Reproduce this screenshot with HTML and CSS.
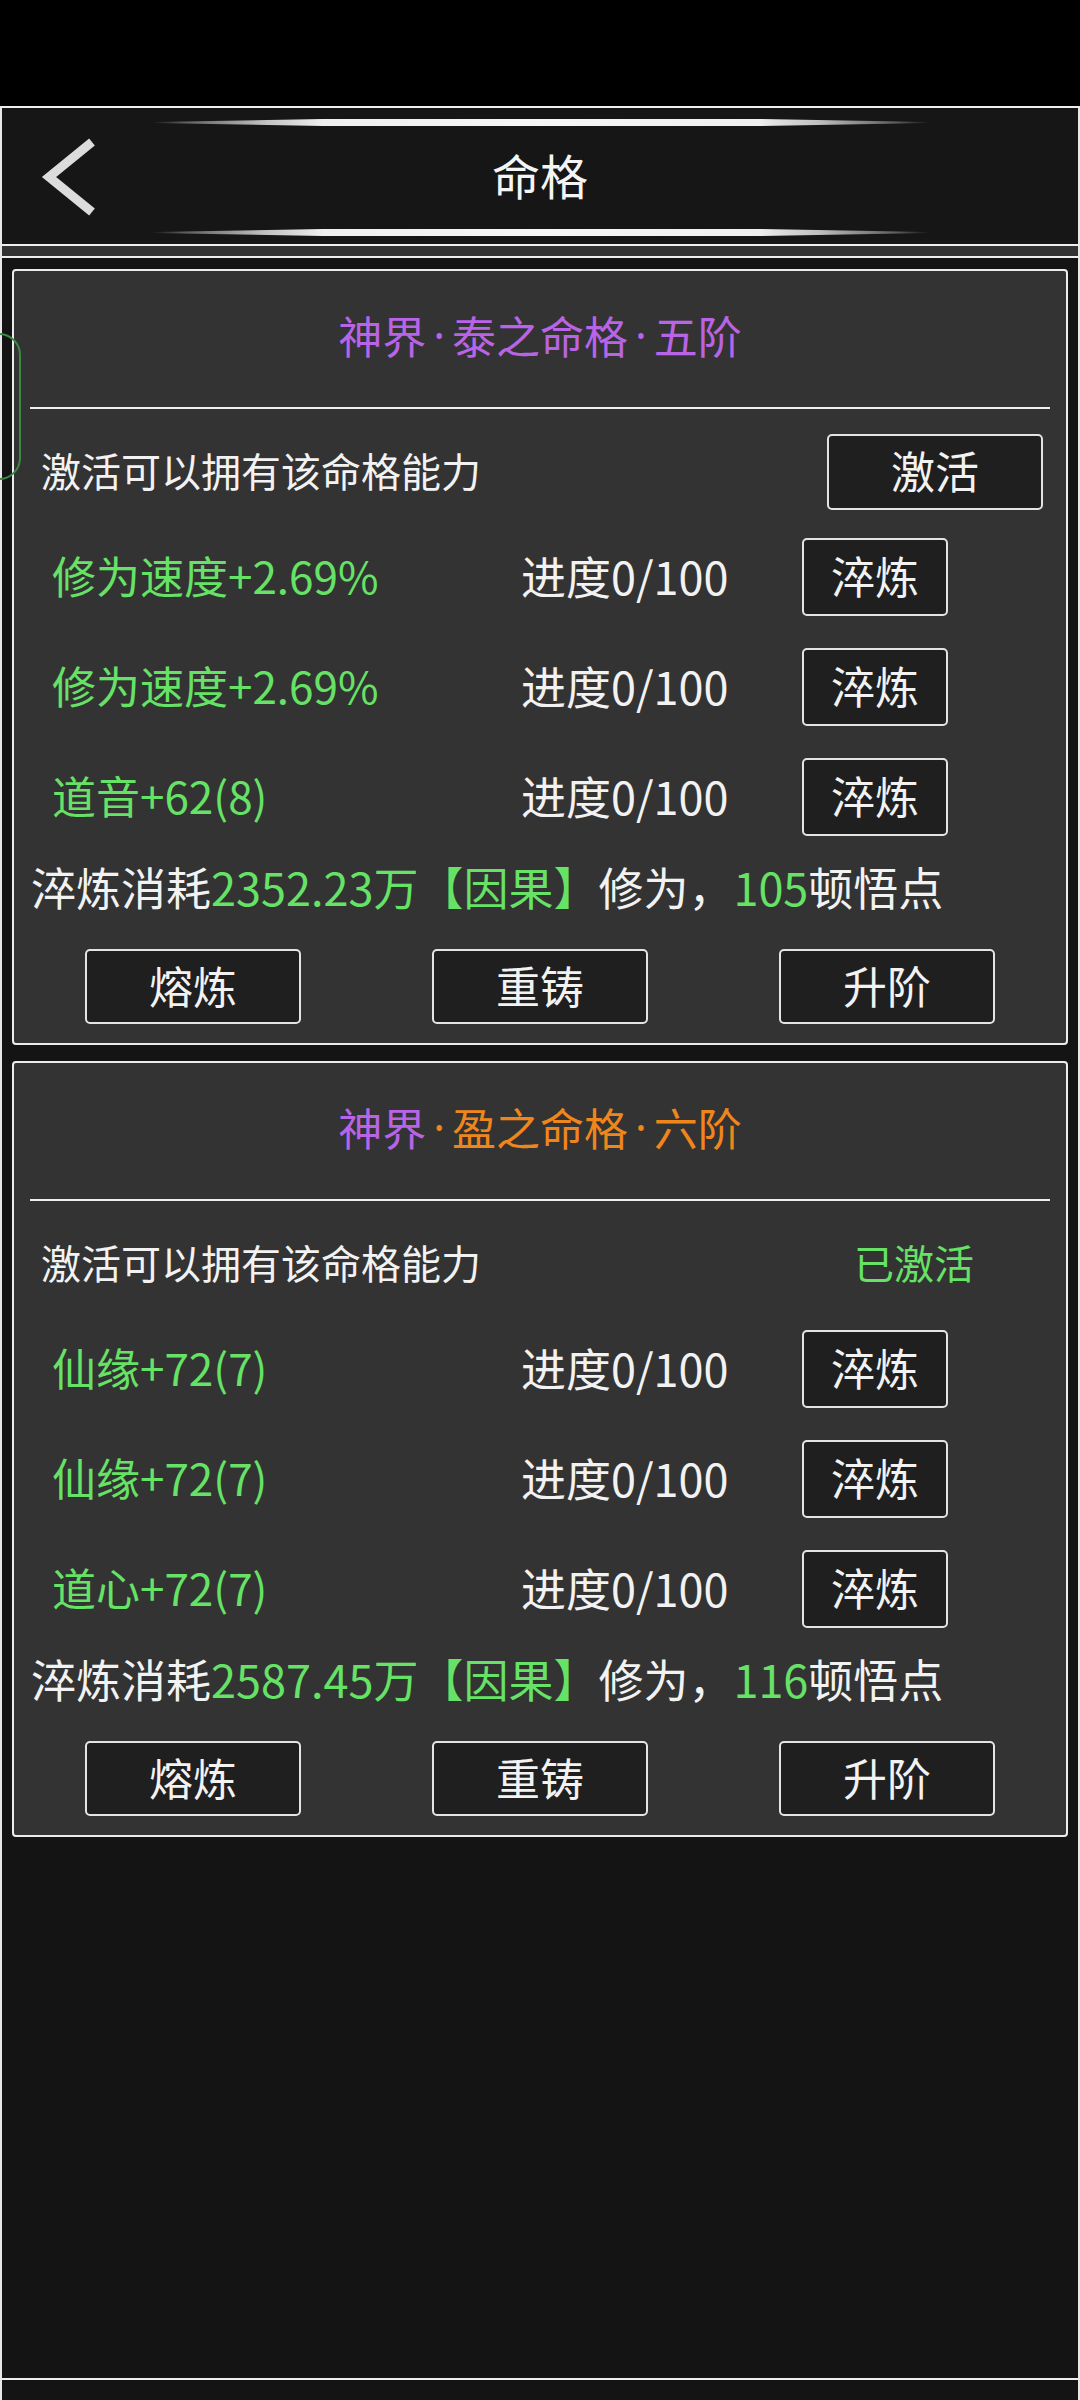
FILE: index.html
```html
<!DOCTYPE html>
<html lang="zh-CN">
<head>
<meta charset="utf-8">
<title>命格</title>
<link rel="stylesheet" href="styles.css">
</head>
<body>
<div class="app">
  <div class="statusbar"></div>
  <div class="frame">
    <header class="header">
      <div class="deco"></div>
      <div class="header-row">
        <svg class="back" width="56" height="80" viewBox="0 0 56 80" aria-label="返回">
          <polyline points="51,4 8,39 51,74" fill="none" stroke="#dcdcdc" stroke-width="9" stroke-linejoin="miter" stroke-miterlimit="10"/>
        </svg>
        <div class="title">命格</div>
        <div class="spacer"></div>
      </div>
      <div class="deco"></div>
    </header>
    <div class="band"></div>
    <main class="content">
      <div class="side-tab"></div>

      <section class="card">
        <div class="card-title purple">神界<span class="dot">·</span>泰之命格<span class="dot">·</span>五阶</div>
        <div class="sep"></div>
        <div class="act-row">
          <span class="act-text">激活可以拥有该命格能力</span>
          <button class="btn btn-wide">激活</button>
        </div>
        <div class="attrs">
          <div class="attr">
            <span class="attr-name">修为速度+2.69%</span>
            <span class="attr-prog">进度0/100</span>
            <button class="btn btn-sm">淬炼</button>
          </div>
          <div class="attr">
            <span class="attr-name">修为速度+2.69%</span>
            <span class="attr-prog">进度0/100</span>
            <button class="btn btn-sm">淬炼</button>
          </div>
          <div class="attr">
            <span class="attr-name">道音+62(8)</span>
            <span class="attr-prog">进度0/100</span>
            <button class="btn btn-sm">淬炼</button>
          </div>
        </div>
        <div class="cost">淬炼消耗<span class="green">2352.23万【因果】</span>修为，<span class="green">105</span>顿悟点</div>
        <div class="actions">
          <button class="btn btn-wide">熔炼</button>
          <button class="btn btn-wide">重铸</button>
          <button class="btn btn-wide">升阶</button>
        </div>
      </section>

      <section class="card">
        <div class="card-title"><span class="purple">神界</span><span class="dot orange">·</span><span class="orange">盈之命格</span><span class="dot orange">·</span><span class="orange">六阶</span></div>
        <div class="sep"></div>
        <div class="act-row">
          <span class="act-text">激活可以拥有该命格能力</span>
          <span class="status">已激活</span>
        </div>
        <div class="attrs">
          <div class="attr">
            <span class="attr-name">仙缘+72(7)</span>
            <span class="attr-prog">进度0/100</span>
            <button class="btn btn-sm">淬炼</button>
          </div>
          <div class="attr">
            <span class="attr-name">仙缘+72(7)</span>
            <span class="attr-prog">进度0/100</span>
            <button class="btn btn-sm">淬炼</button>
          </div>
          <div class="attr">
            <span class="attr-name">道心+72(7)</span>
            <span class="attr-prog">进度0/100</span>
            <button class="btn btn-sm">淬炼</button>
          </div>
        </div>
        <div class="cost">淬炼消耗<span class="green">2587.45万【因果】</span>修为，<span class="green">116</span>顿悟点</div>
        <div class="actions">
          <button class="btn btn-wide">熔炼</button>
          <button class="btn btn-wide">重铸</button>
          <button class="btn btn-wide">升阶</button>
        </div>
      </section>
    </main>
    <div class="footer"></div>
  </div>
</div>
</body>
</html>
```

FILE: styles.css
```css
* {
  box-sizing: border-box;
}

html, body {
  margin: 0;
  padding: 0;
  background: #000;
}

body {
  font-family: "Noto Sans CJK SC", "Noto Sans", sans-serif;
  color: #f2f2f2;
  line-height: 1.2;
}

.app {
  width: 1080px;
  height: 2400px;
  display: flex;
  flex-direction: column;
  overflow: hidden;
}

.statusbar {
  height: 106px;
  background: #000;
  flex: none;
}

.frame {
  flex: 1;
  display: flex;
  flex-direction: column;
  border-top: 2px solid #efefef;
  border-left: 2px solid #e8e8e8;
  border-right: 2px solid #e8e8e8;
  background: #141414;
}

/* header */
.header {
  height: 136px;
  flex: none;
  background: #161616;
  padding-top: 11px;
  display: flex;
  flex-direction: column;
}

.deco {
  width: 777px;
  height: 7px;
  margin: 0 auto;
  flex: none;
  background: linear-gradient(90deg,
    rgba(120,120,120,0) 0%,
    #5a5a5a 4%,
    #bdbdbd 14%,
    #efefef 22%,
    #f6f6f6 50%,
    #efefef 78%,
    #bdbdbd 86%,
    #5a5a5a 96%,
    rgba(120,120,120,0) 100%);
  clip-path: polygon(0 42%, 22% 0, 78% 0, 100% 42%, 100% 58%, 78% 100%, 22% 100%, 0 58%);
}

.header-row {
  height: 103px;
  display: grid;
  grid-template-columns: 1fr auto 1fr;
  align-items: center;
}

.back {
  margin-left: 39px;
  display: block;
}

.title {
  font-size: 48px;
  color: #f4f4f4;
  line-height: 1;
  padding-bottom: 8px;
}

.band {
  flex: none;
  height: 14px;
  background: #333;
  border-top: 2px solid #efefef;
  border-bottom: 2px solid #efefef;
}

/* content */
.content {
  flex: 1;
  position: relative;
  padding: 11px 10px 0;
  display: flex;
  flex-direction: column;
  gap: 16px;
}

.side-tab {
  position: absolute;
  left: -62px;
  top: 75px;
  width: 81px;
  height: 147px;
  border: 2px solid #3b8a44;
  border-radius: 22px;
}

.card {
  background: #333333;
  border: 2px solid #ececec;
  border-radius: 4px;
  padding-bottom: 19px;
}

.card-title {
  height: 136px;
  padding-bottom: 8px;
  display: flex;
  align-items: center;
  justify-content: center;
  font-size: 44px;
  line-height: 1;
  white-space: nowrap;
}

.dot {
  font-family: "Noto Sans", "DejaVu Sans", sans-serif;
  margin: 0 7px;
}

.purple { color: #b964e6; }
.orange { color: #ef861c; }
.green { color: #66e266; }

.sep {
  height: 2px;
  background: #efefef;
  margin: 0 16px;
}

.act-row {
  margin-top: 25px;
  height: 76px;
  display: flex;
  align-items: center;
  justify-content: space-between;
  padding: 0 23px 0 27px;
}

.act-text {
  font-size: 40px;
  line-height: 1;
  white-space: nowrap;
  padding-bottom: 4px;
}

.status {
  width: 216px;
  padding-left: 27px;
  padding-bottom: 4px;
  font-size: 40px;
  line-height: 1;
  color: #66e266;
}

.attrs {
  margin-top: 28px;
  display: flex;
  flex-direction: column;
  gap: 32px;
}

.attr {
  height: 78px;
  display: grid;
  grid-template-columns: 469px 281px 146px;
  align-items: center;
  padding-left: 38px;
}

.attr-name {
  font-size: 44px;
  line-height: 1;
  color: #66e266;
  white-space: nowrap;
  padding-bottom: 4px;
}

.attr-prog {
  font-size: 45px;
  line-height: 1;
  white-space: nowrap;
  padding-bottom: 4px;
}

.cost {
  margin-top: 26px;
  height: 50px;
  line-height: 50px;
  font-size: 45px;
  padding-left: 17px;
  white-space: nowrap;
}

.actions {
  margin-top: 37px;
  display: flex;
  justify-content: space-between;
  padding: 0 71px;
}

.btn {
  font-family: inherit;
  margin: 0;
  padding: 0 0 4px;
  background: #1f1f1f;
  border: 2px solid #e4e4e4;
  border-radius: 5px;
  color: #f2f2f2;
  font-size: 44px;
  line-height: 1;
  display: flex;
  align-items: center;
  justify-content: center;
}

.btn-wide {
  width: 216px;
  height: 76px;
}

.actions .btn-wide {
  height: 75px;
}

.btn-sm {
  width: 146px;
  height: 78px;
}

.footer {
  flex: none;
  height: 22px;
  border-top: 2px solid #efefef;
  background: #141414;
}
```
